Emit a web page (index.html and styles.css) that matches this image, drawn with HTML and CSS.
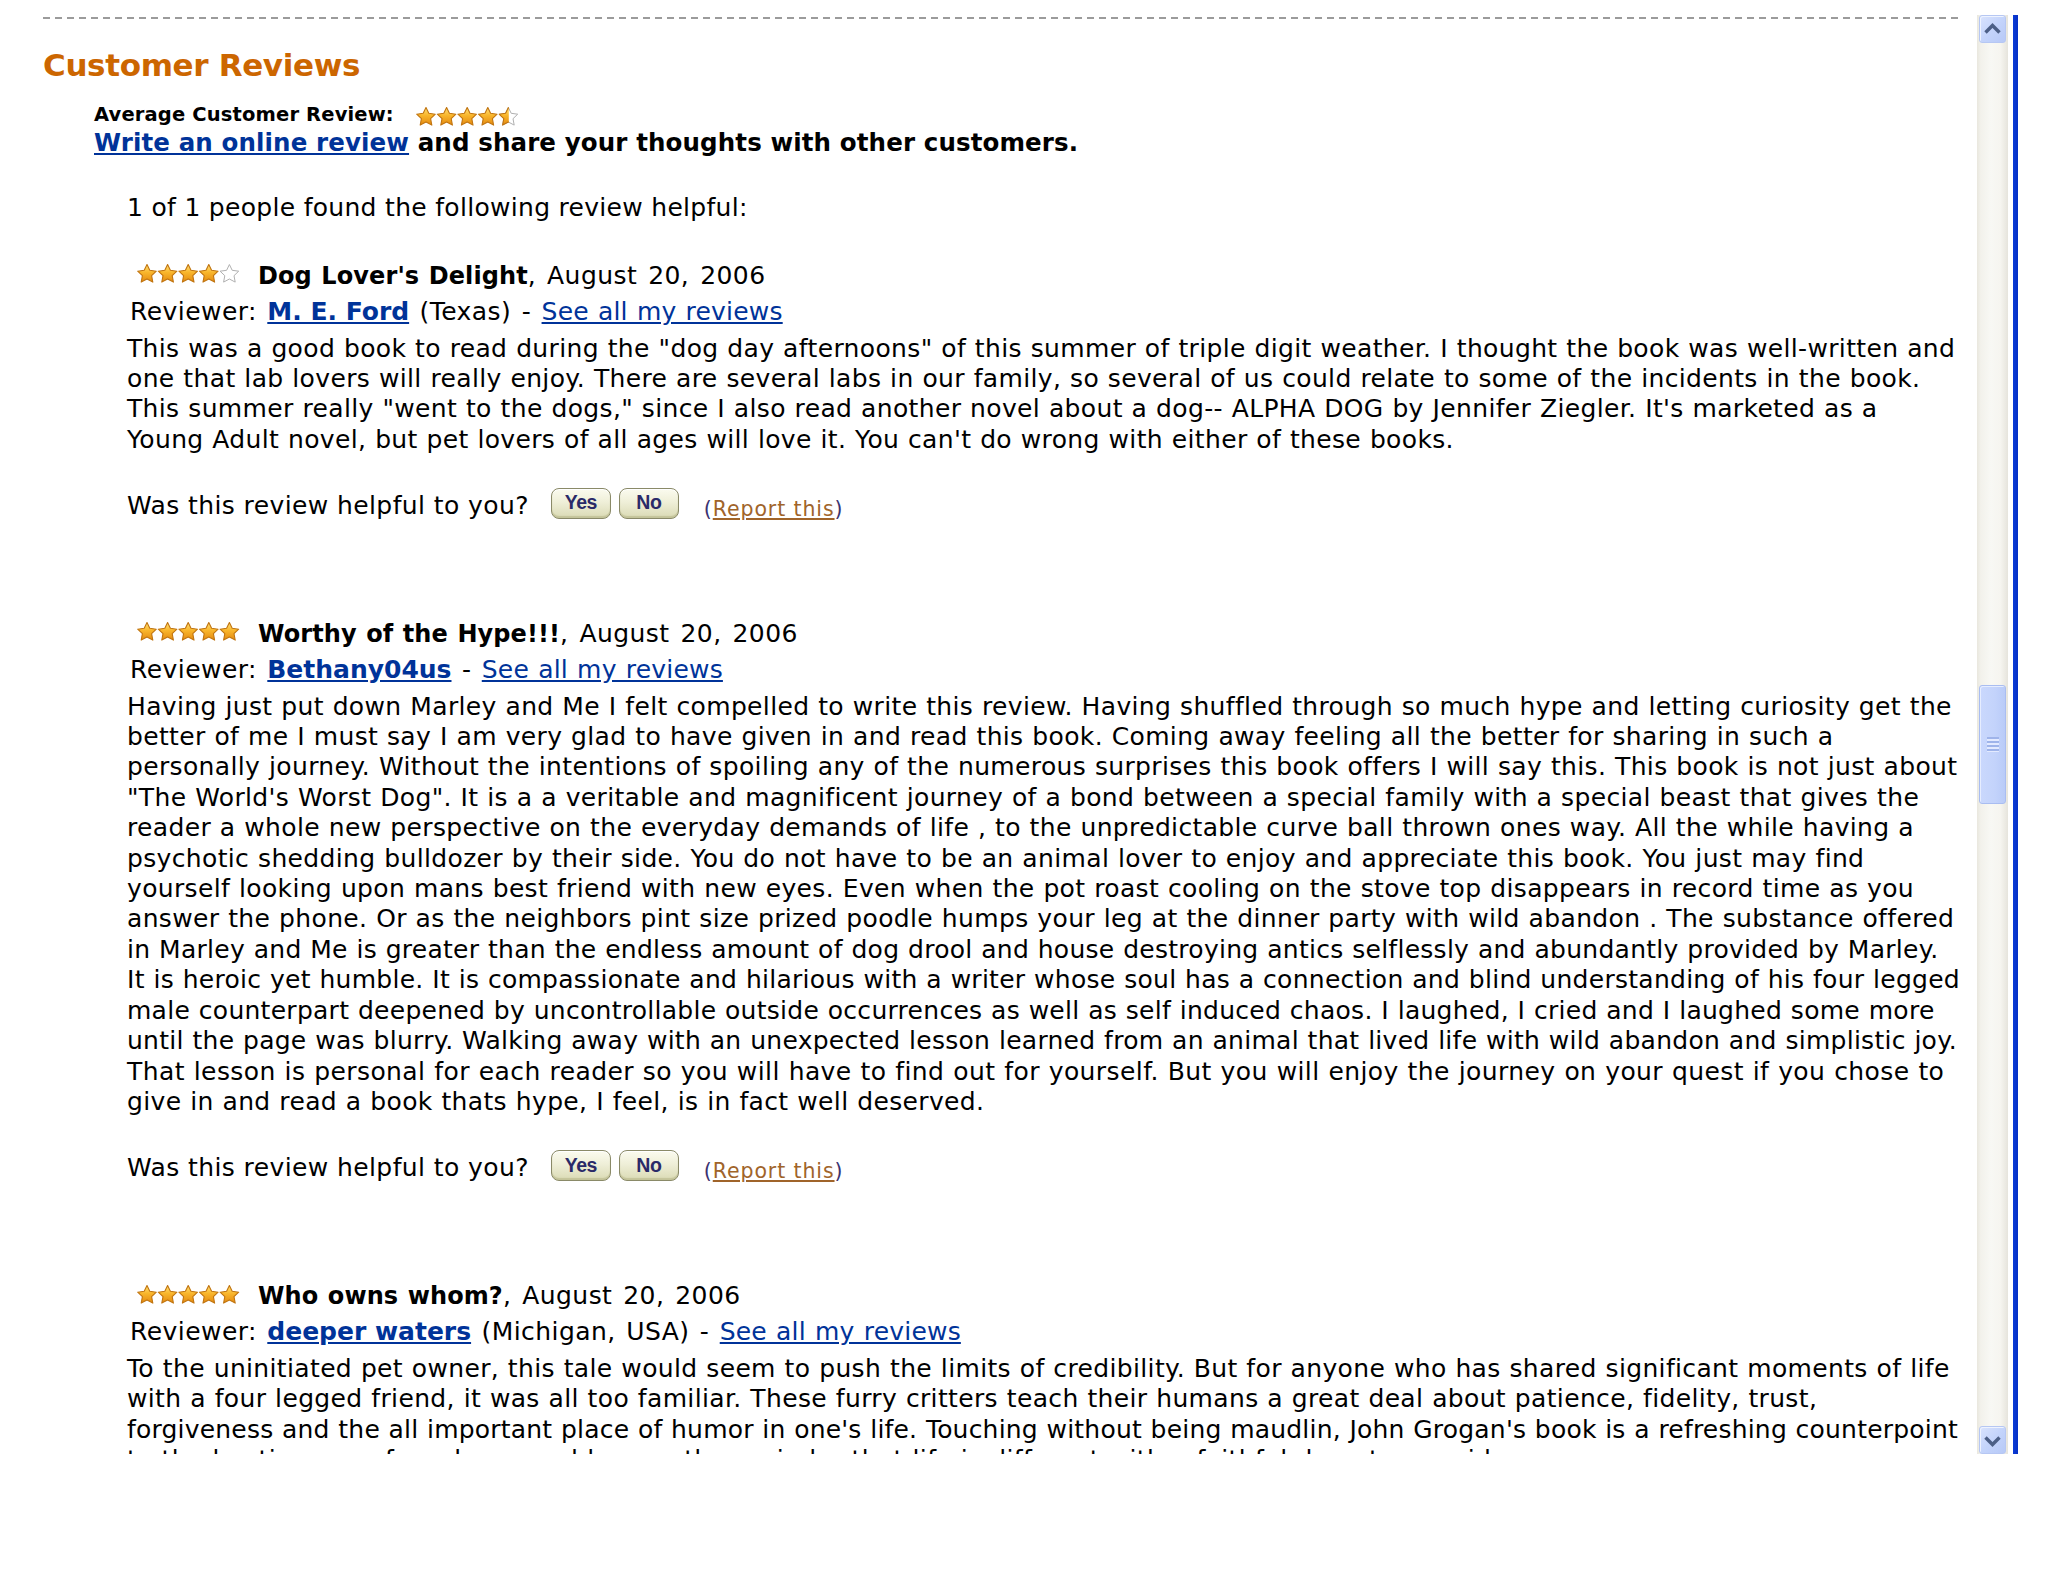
FILE: index.html
```html
<!DOCTYPE html>
<html lang="en">
<head>
<meta charset="utf-8">
<title>Customer Reviews</title>
<link rel="stylesheet" href="styles.css">
</head>
<body>
<svg class="svg-defs" width="0" height="0" aria-hidden="true">
  <defs>
    <linearGradient id="starFill" x1="0" y1="0" x2="0" y2="1">
      <stop offset="0" stop-color="#ffe27a"/>
      <stop offset="0.45" stop-color="#f9b62c"/>
      <stop offset="1" stop-color="#e48a10"/>
    </linearGradient>
    <path id="star" d="M10 0.5 L12.8 6.3 L19.3 7.2 L14.6 11.7 L15.8 18.1 L10 15 L4.2 18.1 L5.4 11.7 L0.7 7.2 L7.2 6.3 Z"/>
    <clipPath id="halfClip"><rect x="0" y="0" width="10.4" height="19"/></clipPath>
  </defs>
</svg>

<div class="window">
  <main class="viewport">
    <div class="rule"></div>
    <h2 class="section-title">Customer Reviews</h2>

    <div class="summary">
      <div class="avg">
        <span class="avg-label">Average Customer Review:</span>
        <svg class="stars-avg" viewBox="0 0 103 19" width="103" height="19">
          <use href="#star" x="0" class="s-full"/>
          <use href="#star" x="20.6" class="s-full"/>
          <use href="#star" x="41.2" class="s-full"/>
          <use href="#star" x="61.8" class="s-full"/>
          <use href="#star" x="82.4" class="s-empty"/>
          <g transform="translate(82.4 0)" clip-path="url(#halfClip)"><use href="#star" class="s-full"/></g>
        </svg>
      </div>
      <div class="write"><a href="#" class="link-bold">Write an online review</a> and share your thoughts with other customers.</div>
    </div>

    <div class="reviews">
      <p class="helpful-count">1 of 1 people found the following review helpful:</p>

      <article class="review">
        <div class="review-head">
          <svg class="stars" viewBox="0 0 103 19" width="103" height="19">
            <use href="#star" x="0" class="s-full"/>
            <use href="#star" x="20.6" class="s-full"/>
            <use href="#star" x="41.2" class="s-full"/>
            <use href="#star" x="61.8" class="s-full"/>
            <use href="#star" x="82.4" class="s-empty"/>
          </svg>
          <span class="review-title"><b>Dog Lover's Delight</b>, August 20, 2006</span>
        </div>
        <div class="reviewer">Reviewer: <a href="#" class="link-bold">M. E. Ford</a> (Texas) - <a href="#" class="link">See all my reviews</a></div>
        <p class="review-text">This was a good book to read during the "dog day afternoons" of this summer of triple digit weather. I thought the book was well-written and<br>one that lab lovers will really enjoy. There are several labs in our family, so several of us could relate to some of the incidents in the book.<br>This summer really "went to the dogs," since I also read another novel about a dog-- ALPHA DOG by Jennifer Ziegler. It's marketed as a<br>Young Adult novel, but pet lovers of all ages will love it. You can't do wrong with either of these books.</p>
        <div class="vote">
          <span class="vote-q">Was this review helpful to you?</span>
          <button class="vote-btn vote-yes" type="button">Yes</button>
          <button class="vote-btn" type="button">No</button>
          <span class="report">(<a href="#">Report this</a>)</span>
        </div>
      </article>

      <article class="review">
        <div class="review-head">
          <svg class="stars" viewBox="0 0 103 19" width="103" height="19">
            <use href="#star" x="0" class="s-full"/>
            <use href="#star" x="20.6" class="s-full"/>
            <use href="#star" x="41.2" class="s-full"/>
            <use href="#star" x="61.8" class="s-full"/>
            <use href="#star" x="82.4" class="s-full"/>
          </svg>
          <span class="review-title"><b>Worthy of the Hype!!!</b>, August 20, 2006</span>
        </div>
        <div class="reviewer">Reviewer: <a href="#" class="link-bold">Bethany04us</a> - <a href="#" class="link">See all my reviews</a></div>
        <p class="review-text">Having just put down Marley and Me I felt compelled to write this review. Having shuffled through so much hype and letting curiosity get the<br>better of me I must say I am very glad to have given in and read this book. Coming away feeling all the better for sharing in such a<br>personally journey. Without the intentions of spoiling any of the numerous surprises this book offers I will say this. This book is not just about<br>"The World's Worst Dog". It is a a veritable and magnificent journey of a bond between a special family with a special beast that gives the<br>reader a whole new perspective on the everyday demands of life , to the unpredictable curve ball thrown ones way. All the while having a<br>psychotic shedding bulldozer by their side. You do not have to be an animal lover to enjoy and appreciate this book. You just may find<br>yourself looking upon mans best friend with new eyes. Even when the pot roast cooling on the stove top disappears in record time as you<br>answer the phone. Or as the neighbors pint size prized poodle humps your leg at the dinner party with wild abandon . The substance offered<br><span class="tight">in Marley and Me is greater than the endless amount of dog drool and house destroying antics selflessly and abundantly provided by Marley.</span><br><span class="tight">It is heroic yet humble. It is compassionate and hilarious with a writer whose soul has a connection and blind understanding of his four legged</span><br><span class="tight">male counterpart deepened by uncontrollable outside occurrences as well as self induced chaos. I laughed, I cried and I laughed some more</span><br><span class="tight">until the page was blurry. Walking away with an unexpected lesson learned from an animal that lived life with wild abandon and simplistic joy.</span><br><span class="loose">That lesson is personal for each reader so you will have to find out for yourself. But you will enjoy the journey on your quest if you chose to</span><br>give in and read a book thats hype, I feel, is in fact well deserved.</p>
        <div class="vote">
          <span class="vote-q">Was this review helpful to you?</span>
          <button class="vote-btn vote-yes" type="button">Yes</button>
          <button class="vote-btn" type="button">No</button>
          <span class="report">(<a href="#">Report this</a>)</span>
        </div>
      </article>

      <article class="review">
        <div class="review-head">
          <svg class="stars" viewBox="0 0 103 19" width="103" height="19">
            <use href="#star" x="0" class="s-full"/>
            <use href="#star" x="20.6" class="s-full"/>
            <use href="#star" x="41.2" class="s-full"/>
            <use href="#star" x="61.8" class="s-full"/>
            <use href="#star" x="82.4" class="s-full"/>
          </svg>
          <span class="review-title"><b>Who owns whom?</b>, August 20, 2006</span>
        </div>
        <div class="reviewer">Reviewer: <a href="#" class="link-bold">deeper waters</a> (Michigan, USA) - <a href="#" class="link">See all my reviews</a></div>
        <p class="review-text">To the uninitiated pet owner, this tale would seem to push the limits of credibility. But for anyone who has shared significant moments of life<br>with a four legged friend, it was all too familiar. These furry critters teach their humans a great deal about patience, fidelity, trust,<br><span class="tighter">forgiveness and the all important place of humor in one's life. Touching without being maudlin, John Grogan's book is a refreshing counterpoint</span><br>to the hectic pace of our busy world, a gentle reminder that life is different with a faithful dog at your side.</p>
      </article>
    </div>
  </main>

  <div class="scrollbar" aria-hidden="true">
    <div class="sb-btn">
      <svg viewBox="0 0 27 28" width="27" height="28"><polyline points="6.5,17.5 13.5,10.5 20.5,17.5" class="sb-arrow"/></svg>
    </div>
    <div class="sb-track">
      <div class="sb-thumb"><span class="sb-grip"></span></div>
    </div>
    <div class="sb-btn">
      <svg viewBox="0 0 27 28" width="27" height="28"><polyline points="6.5,11.5 13.5,18.5 20.5,11.5" class="sb-arrow"/></svg>
    </div>
  </div>
  <div class="frame-edge"></div>
</div>
</body>
</html>
```

FILE: styles.css
```css
* { box-sizing: border-box; }

html, body {
  margin: 0;
  padding: 0;
  background: #ffffff;
}

body {
  font-family: "DejaVu Sans", Verdana, sans-serif;
  color: #000;
}

.svg-defs {
  display: block;
  width: 0;
  height: 0;
  overflow: hidden;
}

.window {
  display: flex;
  margin-top: 15px;
  height: 1439px;
}

.viewport {
  width: 1977px;
  flex: none;
  height: 100%;
  overflow: hidden;
  padding: 2px 19px 0 43px;
}

.rule {
  height: 2px;
  background: repeating-linear-gradient(to right, #9b9b9b 0 7px, transparent 7px 12px);
}

.section-title {
  margin: 27px 0 0 0;
  font-family: "DejaVu Sans", Verdana, sans-serif;
  font-weight: bold;
  font-size: 31px;
  line-height: 38px;
  letter-spacing: -0.35px;
  color: #cc6600;
}

.summary {
  margin-left: 51px;
}

.avg {
  margin-top: 19px;
  height: 24px;
  display: flex;
  align-items: center;
}

.avg-label {
  font-weight: bold;
  font-size: 19.5px;
  letter-spacing: 0.15px;
  line-height: 24px;
}

.stars-avg {
  display: block;
  flex: none;
  margin-left: 22px;
  margin-top: 2px;
}

.write {
  margin-top: 1px;
  font-weight: bold;
  font-size: 24.5px;
  letter-spacing: 0.12px;
  line-height: 30px;
  white-space: nowrap;
}

.link-bold,
.link {
  color: #003399;
  text-decoration: underline;
}

.link-bold { font-weight: bold; }

.reviews {
  margin-left: 84px;
  font-size: 25px;
  letter-spacing: 0.3px;
}

.helpful-count {
  margin: 35px 0 0 0;
  line-height: 30.5px;
}

.review {
  margin-top: 37px;
}

.review + .review {
  margin-top: 97px;
}

.review-head {
  display: flex;
  align-items: center;
  height: 30.5px;
}

.stars {
  display: block;
  flex: none;
  margin-left: 10px;
  margin-bottom: 4px;
}

.s-full {
  fill: url(#starFill);
  stroke: #c07410;
  stroke-width: 1.1;
  stroke-linejoin: round;
}

.s-empty {
  fill: #ffffff;
  stroke: #b0b0b0;
  stroke-width: 1;
  stroke-linejoin: round;
}

.review-title {
  margin-left: 18px;
  line-height: 30.5px;
  letter-spacing: 0.45px;
  word-spacing: 2.5px;
  white-space: nowrap;
}

.review-title b {
  font-size: 24px;
  letter-spacing: 0.1px;
  word-spacing: 1px;
}

.reviewer {
  margin-top: 6px;
  padding-left: 3px;
  line-height: 30.5px;
  letter-spacing: 0.45px;
  word-spacing: 2px;
  white-space: nowrap;
}

.reviewer .link-bold {
  letter-spacing: 0;
  word-spacing: 0;
}

.reviewer .link {
  letter-spacing: 0.2px;
  word-spacing: 1px;
}

.review-text {
  margin: 6px 0 0 0;
  line-height: 30.4px;
  letter-spacing: 0.35px;
  word-spacing: 0.5px;
  white-space: nowrap;
}

.review-text .loose {
  letter-spacing: 0.41px;
}

.review-text .tight {
  letter-spacing: 0.27px;
}

.review-text .tighter {
  letter-spacing: 0.2px;
}

.vote {
  margin-top: 36px;
  height: 30.5px;
  display: flex;
  align-items: center;
}

.vote-q {
  line-height: 30.5px;
  letter-spacing: 0.4px;
  white-space: nowrap;
}

.vote-btn {
  height: 31px;
  width: 60px;
  margin: 0 0 6px 8px;
  padding: 0 0 2px 0;
  border: 1px solid #8a8a68;
  border-radius: 8px;
  background: linear-gradient(to bottom, #fbfbef 0%, #efefd8 45%, #dadab4 100%);
  box-shadow: inset 0 -2px 1px #c4c49a, inset 0 1px 0 #ffffff;
  font-family: "Liberation Sans", Arial, sans-serif;
  font-weight: bold;
  font-size: 19.5px;
  letter-spacing: -0.4px;
  color: #2a2a68;
  line-height: 26px;
}

.vote-yes {
  margin-left: 22px;
}

.report {
  margin-left: 25px;
  font-size: 20.5px;
  letter-spacing: 0.9px;
  color: #3b3370;
  white-space: nowrap;
  line-height: 30.5px;
  padding-top: 5px;
}

.report a {
  color: #a0642a;
  text-decoration: underline;
}

/* scrollbar */
.scrollbar {
  width: 31px;
  flex: none;
  height: 100%;
  display: flex;
  flex-direction: column;
  padding: 0 2px;
  background: linear-gradient(to right, #e9e7de 0, #f2f1eb 12%, #f8f8f4 45%, #f6f5f0 75%, #e6e4dc 100%);
}

.sb-btn {
  height: 28px;
  flex: none;
  border: 1px solid #b6c7f3;
  border-radius: 3px;
  background: linear-gradient(to bottom right, #d9e3fd 0%, #c4d4fb 50%, #b7c9f7 100%);
  box-shadow: inset 1px 1px 0 #eef3ff;
  overflow: hidden;
}

.sb-btn svg {
  display: block;
  margin: -1px;
}

.sb-arrow {
  fill: none;
  stroke: #4c5f86;
  stroke-width: 3.4;
  stroke-linecap: butt;
  stroke-linejoin: miter;
}

.sb-track {
  flex: 1;
  padding-top: 642px;
}

.sb-thumb {
  height: 119px;
  border: 1px solid #a9bdf1;
  border-radius: 3px;
  background: linear-gradient(to right, #cad8fd 0%, #c3d3fb 60%, #b9cbf8 100%);
  box-shadow: inset 1px 1px 0 #e6edff;
  display: flex;
  align-items: center;
  justify-content: center;
}

.sb-grip {
  display: block;
  width: 12px;
  height: 15px;
  background: repeating-linear-gradient(to bottom, #9fb4ea 0 2px, #e3eaff 2px 4px);
}

.frame-edge {
  width: 5px;
  flex: none;
  margin-left: 5px;
  height: 100%;
  background: linear-gradient(to right, #0b3bd6, #0630c4);
}
```
